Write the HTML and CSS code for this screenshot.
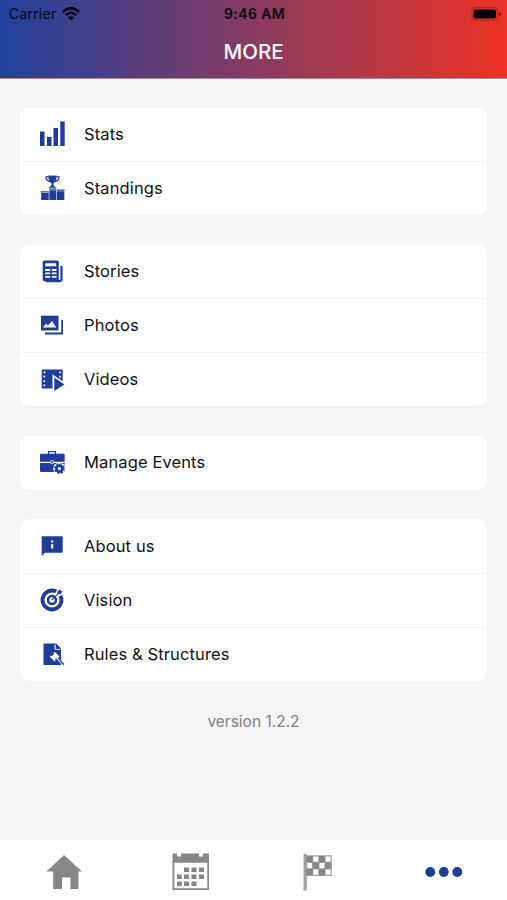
FILE: index.html
```html
<!DOCTYPE html>
<html lang="en">
<head>
<meta charset="utf-8">
<title>More</title>
<link rel="stylesheet" href="styles.css">
</head>
<body>
<div class="app">
  <header class="header">
    <div class="status">
      <div class="carrier"><span>Carrier</span>
        <svg class="wifi" viewBox="0 0 18 14"><path d="M1 5Q9-2.600 17 5" fill="none" stroke="#08080c" stroke-width="2.600"/><path d="M3.800 8.200Q9 3.300 14.200 8.200" fill="none" stroke="#08080c" stroke-width="2.400"/><path d="M6 10.600Q9 8 12 10.600L9 13.600Z" fill="#08080c"/></svg>
      </div>
      <span class="time">9:46 AM</span>
      <svg class="battery" viewBox="0 0 31 14"><rect x="1" y=".8" width="25.500" height="12.400" rx="3.500" fill="none" stroke="#a12721" stroke-width="1.100"/><rect x="2.500" y="2.600" width="22.500" height="8.800" rx="2" fill="#000"/><path d="M28 5v4q2-.5 2-2t-2-2" fill="#791d1a"/></svg>
    </div>
    <h1 class="title">MORE</h1>
  </header>

  <main class="content">
    <section class="card">
      <a class="row"><svg class="icon" viewBox="0 0 32 32"><path d="M4 13.500h4.500V28H4zM11 19h4.500v9H11zM17.500 10H22v18h-4.500zM24.300 3.500h4.400V28h-4.400z"/></svg><span>Stats</span></a>
      <a class="row"><svg class="icon" viewBox="0 0 32 32"><path d="M4.600 19.300h8.200v1.200H4.600zM5.200 21h7.600v7H5.200zM13.200 16.500h7.200v1.200h-7.200zM13.400 18.200h6.800V28h-6.800zM20.800 17.500h7.900v1.200h-7.900zM20.800 19.200h7.500V28h-7.500z"/><path d="M12.300 3.500h8.400q0 6-3.200 7.800v2.200l3 2.200h-8l3-2.200v-2.200q-3.200-1.800-3.200-7.800"/><path class="line" d="M12.500 4.800H10q0 4.200 4 4.500M20.500 4.800H23q0 4.200-4 4.500"/></svg><span>Standings</span></a>
    </section>

    <section class="card">
      <a class="row"><svg class="icon" viewBox="0 0 32 32"><path d="M8.500 5.500h12.700q1.600 0 1.600 1.600v19.500H9q-2.300 0-2.300-2.300V7.200q0-1.700 1.800-1.700"/><path d="M25.500 11v13.400q0 1.700-3.500 1.700H10" fill="none" stroke="#1d3c9c" stroke-width="2.200"/><path class="cut" d="M9.200 8.200h11v3h-11zM9.200 14h5v2h-5zM15.800 14h4.700v2h-4.700zM9.200 17.500h5v1.800h-5zM15.800 17.500h4.700v1.800h-4.700zM9.200 21h5v1.800h-5zM15.800 21h4.700v1.800h-4.700zM23.100 12h.9v12h-.9z"/></svg><span>Stories</span></a>
      <a class="row"><svg class="icon" viewBox="0 0 32 32"><path d="M5 6.700h17.500v14.700H5z"/><path class="cut" d="M7 18.500l3-4 2 2 4-4.500 4.300 6.500z"/><path d="M25.300 11h1.700v14.500H9v-2h16.300z"/></svg><span>Photos</span></a>
      <a class="row"><svg class="icon" viewBox="0 0 32 32"><path d="M5.700 6.500h21v19h-21z"/><path class="cut" d="M7.500 8.500h1.700v1.700H7.500zM7.500 12.800h1.700v1.700H7.500zM7.500 17.200h1.700v1.700H7.500zM7.500 21.500h1.700v1.700H7.500zM23.200 8.500h1.700v1.700h-1.700zM23.200 12.800h1.700v1.700h-1.700zM16.500 11.500L31 21v5h-5l-8 3-1.500-1z"/><path d="M18.300 14.500L28.500 21.500 18.300 28z"/></svg><span>Videos</span></a>
    </section>

    <section class="card">
      <a class="row"><svg class="icon" viewBox="0 0 32 32"><path class="line" d="M12.500 8V5.600h7V8"/><path d="M5.500 7.800h22.200q1 0 1 1v7H4v-7q0-1 1.500-1M4 17h24.700v9H5.300Q4 26 4 24.800z"/><path class="cut" d="M14.500 14.500h3.300v3.200h-3.300z"/><circle class="cut" cx="23.400" cy="22.600" r="6.200"/><path d="M15.300 15.200h1.800v1.800h-1.800z"/><circle cx="23.400" cy="22.600" r="3" fill="none" stroke="#1d3c9c" stroke-width="2.800"/><circle cx="23.400" cy="22.600" r="4.600" fill="none" stroke="#1d3c9c" stroke-width="1.700" stroke-dasharray="1.806 1.806"/></svg><span>Manage Events</span></a>
    </section>

    <section class="card">
      <a class="row"><svg class="icon" viewBox="0 0 32 32"><path d="M5.700 6.300h21v16.500H9L5.700 26z"/><path class="cut" d="M15 10.500h2.300v2H15zM15 14.200h2.300v4.300H15z"/></svg><span>About us</span></a>
      <a class="row"><svg class="icon" viewBox="0 0 32 32"><circle cx="16" cy="16" r="9.500" fill="none" stroke="#1d3c9c" stroke-width="3.800"/><circle cx="16" cy="16" r="4" fill="none" stroke="#1d3c9c" stroke-width="2.500"/><path class="cut" d="M18 11l4-6.500 5.500 5.500-6.500 4z"/><path d="M15.300 15.700l6-6 .3-2.500 3-2.200v2l2.300.2-2.500 2.800-2.200.3-5.800 6z"/></svg><span>Vision</span></a>
      <a class="row"><svg class="icon" viewBox="0 0 32 32"><path d="M7.500 5.500H20l5 5V27H7.500z"/><path class="cut" d="M19.700 6.500v4.200H25l-.7 1.100h-5.700V6.500z"/><path d="M20 5.500l5 5h-5z"/><path class="cut" d="M18.700 13.800l4.800 4.800-1.200 1.200-.7-.7-2.600 2.600.7.700-1.200 1.200-4.800-4.800 1.200-1.200.7.700 2.600-2.600-.7-.7zM20.300 20.600l1.400-1.400 7.300 6.800-2 2z"/><path d="M22 20.800l.6-.6 5.800 5.800-1.300 1.200z"/></svg><span>Rules &amp; Structures</span></a>
    </section>

    <p class="version">version 1.2.2</p>
  </main>

  <nav class="tabs">
    <a class="tab"><svg viewBox="0 0 40 40"><path d="M21 3L39 19.500H35.500V37h-8V25.500H19V37h-8.800V19.500H3.500z"/></svg></a>
    <a class="tab"><svg viewBox="0 0 40 40"><path fill-rule="evenodd" d="M2.500 1.500H7V4.500h4V1.500h18v3h4v-3h6v36.500H2.500zM4.300 10.800v25.500h33V10.800z"/><path d="M14 15.600h5V20h-5zM21.500 15.600h5V20h-5zM29 15.600h5V20h-5zM7 22.600h4.800V27H7zM14 22.600h5V27h-5zM21.500 22.600h5V27h-5zM29 22.600h5V27h-5zM7 29.600h4.800V34H7zM14 29.600h5V34h-5zM21.500 29.600h5V34h-5z"/></svg></a>
    <a class="tab"><svg viewBox="0 0 40 40"><path fill="#a0a0a0" d="M6.500 1.800h3.300V38.500H6.500z"/><path fill="none" stroke="#a0a0a0" stroke-width="1.200" d="M9.500 3.800h24.700v19.600H9.500zM9.500 10.300h24.700M9.500 16.800h24.700M15.700 3.800v19.600M21.900 3.800v19.600M28 3.800v19.600"/><path d="M9.500 4h6.200v6.300H9.500zM21.900 4H28v6.300h-6.100zM15.700 10.300h6.200v6.500h-6.200zM28 10.300h6.200v6.500H28zM9.500 16.800h6.200v6.500H9.500zM21.900 16.800H28v6.500h-6.100z"/></svg></a>
    <a class="tab active"><svg viewBox="0 0 40 40"><circle cx="6.300" cy="20" r="4.900"/><circle cx="19.800" cy="20" r="4.900"/><circle cx="33.300" cy="20" r="4.900"/></svg></a>
  </nav>
</div>
</body>
</html>
```
FILE: styles.css
```css
* { box-sizing: border-box; }
body {
  margin: 0;
  font-family: Inter, "Liberation Sans", sans-serif;
  color: #111;
}
.app {
  display: flex;
  flex-direction: column;
  height: 900px;
  background: #f5f5f5;
}
.header {
  height: 79px;
  background: linear-gradient(90deg, #1f419d 0%, #883b60 50%, #ee3226 100%);
  border-bottom: 1px solid #b08a9a;
}
.status {
  display: grid;
  grid-template-columns: 1fr auto 1fr;
  align-items: center;
  height: 27px;
  padding: 0 7px 0 9px;
  font-size: 14px;
  color: #08080c;
}
.carrier {
  display: flex;
  align-items: center;
  gap: 6px;
  letter-spacing: .2px;
}
.wifi { width: 18px; height: 14px; }
.time {
  font-size: 14px;
  font-weight: 600;
  letter-spacing: .4px;
}
.battery { width: 31px; height: 14px; justify-self: end; margin-right: -2px; }
.title {
  margin: 12px 0 0;
  font-size: 20.500px;
  line-height: 26px;
  font-weight: 500;
  text-align: center;
  color: #fff;
}
.content {
  flex: 1;
  display: flex;
  flex-direction: column;
  gap: 29.800px;
  padding: 28.500px 20px 0;
}
.card {
  background: #fff;
  border-radius: 9px;
}
.row {
  display: flex;
  align-items: center;
  gap: 16px;
  height: 54px;
  padding: 0 0 1px 16px;
  font-size: 16.500px;
  letter-spacing: .12px;
}
.row:first-child { height: 53.500px; }
.row + .row { border-top: 1px solid #f4f4f4; }
.icon { width: 32px; height: 32px; fill: #1d3c9c; }
.cut { fill: #fff; }
.line { fill: none; stroke: #1d3c9c; stroke-width: 1.200; }
.version {
  margin: 0;
  font-size: 15.500px;
  line-height: 22px;
  text-align: center;
  color: #808080;
}
.tabs {
  display: grid;
  grid-template-columns: repeat(4, 1fr);
  height: 60px;
  background: #fff;
}
.tab {
  display: flex;
  justify-content: center;
  padding-top: 12px;
  fill: #868686;
}
.tab svg { width: 40px; height: 40px; }
.tab.active { fill: #1d3c9c; }
```
